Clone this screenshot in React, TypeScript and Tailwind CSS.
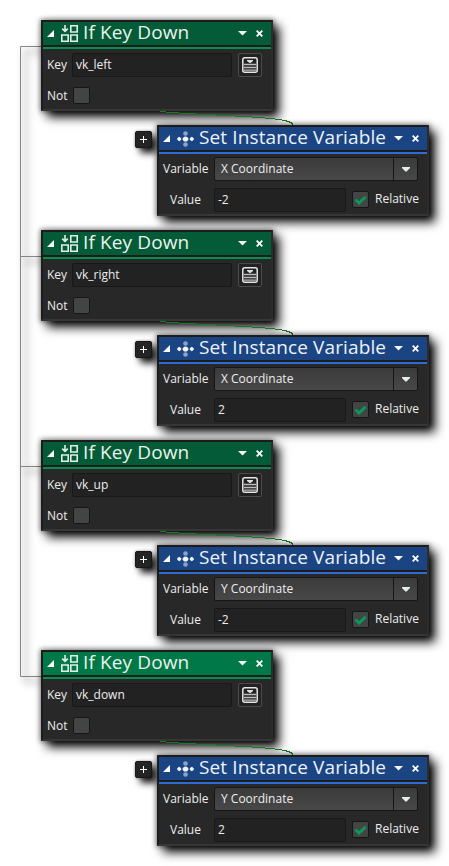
import React from "react";

type Block = { key: string; variable: string; value: string; active?: boolean };

const blocks: Block[] = [
  { key: "vk_left", variable: "X Coordinate", value: "-2" },
  { key: "vk_right", variable: "X Coordinate", value: "2" },
  { key: "vk_up", variable: "Y Coordinate", value: "-2" },
  { key: "vk_down", variable: "Y Coordinate", value: "2", active: true },
];

const card =
  "relative h-[91px] border-2 border-[#1c1c1c] border-b-[#363636] border-r-[#2c2c2c] bg-[#282828] shadow-[6px_6px_10px_0px_rgba(0,0,0,1),0_0_5px_1px_rgba(0,0,0,0.45)]";

function Collapse() {
  return (
    <svg className="h-[7px] w-[7px] shrink-0" viewBox="0 0 7 7">
      <path d="M7 0V7H0Z" fill="#fff" />
    </svg>
  );
}

function Caret() {
  return (
    <svg className="h-[5px] w-[9px] shrink-0" viewBox="0 0 9 5">
      <path d="M0 0H9L4.5 4.5Z" fill="#f6f6f6" />
    </svg>
  );
}

function SelectCaret() {
  return (
    <svg className="h-[5px] w-[8px] shrink-0" viewBox="0 0 8 5">
      <path d="M0 0H8V1L4.6 4.5H3.4L0 1Z" fill="#e4eee9" />
    </svg>
  );
}

function Close() {
  return (
    <svg className="h-[7px] w-[7px] shrink-0" viewBox="0 0 7 7">
      <path d="M.7 .7L6.3 6.3M6.3 .7L.7 6.3" stroke="#fff" strokeWidth="1.8" />
    </svg>
  );
}

function KeyIcon() {
  return (
    <svg className="h-[17px] w-[17px] shrink-0" viewBox="0 0 17 17" fill="none" stroke="#e2eee7" strokeWidth="1.6">
      <path d="M9.8 .8h6.4v6.2H9.8zM.8 10h6.4v6.2H.8zM9.8 10h6.4v6.2H9.8z" />
      <path d="M4 0V6.5M1.2 3.6L4 6.4L6.8 3.6" />
    </svg>
  );
}

function VariableIcon() {
  return (
    <svg className="h-4 w-[17px] shrink-0" viewBox="0 0 17 16">
      <g fill="#8da4c8">
        <circle cx="8.5" cy="2.5" r="2.3" />
        <circle cx="8.5" cy="13.5" r="2.3" />
      </g>
      <g fill="#f1f5fb">
        <path d="M2.2 5.8L4.6 8L2.2 10.2L0 8zM14.8 5.8L17 8L14.8 10.2L12.4 8z" />
        <circle cx="2.2" cy="8" r="1.8" />
        <circle cx="14.8" cy="8" r="1.8" />
        <circle cx="8.5" cy="8" r="2.6" />
        <path d="M5 8L7 6.8V9.2zM12 8L10 6.8V9.2z" />
      </g>
    </svg>
  );
}

function ListIcon() {
  return (
    <svg className="h-4 w-4" viewBox="0 0 16 16">
      <rect x=".8" y=".8" width="14.4" height="14.4" rx="2" fill="none" stroke="#e6e6e6" strokeWidth="1.5" />
      <path d="M5 3H11V4L8.5 6H7.5L5 4Z" fill="#dedede" />
      <path d="M2 7.5h12M2 10.5h12M2 13.1h12" stroke="#bcbcbc" strokeWidth="1.3" />
    </svg>
  );
}

function Checkbox({ checked }: { checked?: boolean }) {
  return (
    <div className="h-[17px] w-[17px] shrink-0 rounded-[2px] border border-[#161616] bg-[#434444]">
      {checked && (
        <svg className="h-[15px] w-[15px]" viewBox="0 0 15 15">
          <path d="M2.4 7.5L6 11L12.6 4.9" fill="none" stroke="#079a5a" strokeWidth="2.8" />
        </svg>
      )}
    </div>
  );
}

const field =
  "h-6 shrink-0 rounded-[2px] border border-[#181818] bg-[#222222] pl-[3px] leading-[22px]";

const title =
  "-mt-1 ml-[5px] flex-1 whitespace-nowrap text-[19px] leading-[22px] tracking-[0.12px]";

function ConditionCard({ block }: { block: Block }) {
  return (
    <div className={`${card} ml-[41px] w-[232px]`}>
      <div className={`flex h-[23px] items-center pl-1 pr-2 ${block.active ? "bg-[#007847]" : "bg-[#045b37]"}`}>
        <Collapse />
        <div className="ml-[7px]"><KeyIcon /></div>
        <span className={`${title} text-[#eaf3ee]`}>If Key Down</span>
        <Caret />
        <div className="ml-[9px]"><Close /></div>
      </div>
      <div className="h-1 border-t-2 border-[#1c1c1c] bg-[#078d52]" />
      <div className="mt-1 flex items-center pl-1">
        <span className="w-[25px]">Key</span>
        <div className={`${field} w-[160px]`}>{block.key}</div>
        <div className="ml-[6px] flex h-6 w-6 items-center justify-center rounded-[2px] border border-[#4b4b4b] bg-[#222]">
          <ListIcon />
        </div>
      </div>
      <div className="mt-[10px] flex h-[17px] items-center pl-1">
        <span className="w-[26px]">Not</span>
        <Checkbox />
      </div>
    </div>
  );
}

function ActionCard({ block }: { block: Block }) {
  return (
    <div className={`${card} w-[272px]`}>
      <div className="flex h-[23px] items-center bg-[#1b4483] pl-1 pr-2">
        <Collapse />
        <div className="ml-[7px]"><VariableIcon /></div>
        <span className={`${title} text-[#edf2fa]`}>Set Instance Variable</span>
        <Caret />
        <div className="ml-[9px]"><Close /></div>
      </div>
      <div className="h-1 border-t-2 border-[#1c1c1c] bg-[#2e6bd3]" />
      <div className="mt-[3px] flex items-center pl-1">
        <span className="w-[51px]">Variable</span>
        <div className="flex h-6 w-[204px] rounded-[2px] border border-[#161616] bg-gradient-to-b from-[#3b3b3b] to-[#484848]">
          <span className="flex-1 pl-[6px] leading-[22px]">{block.variable}</span>
          <div className="flex w-6 items-center justify-center border-l border-[#161616]">
            <SelectCaret />
          </div>
        </div>
      </div>
      <div className="mt-[7px] flex items-center pl-[11px]">
        <span className="w-[44px]">Value</span>
        <div className={`${field} w-[132px]`}>{block.value}</div>
        <div className="-mt-[1px] ml-[6px] flex items-center">
          <Checkbox checked />
          <span className="-mt-px ml-[6px] leading-4">Relative</span>
        </div>
      </div>
    </div>
  );
}

export default function App() {
  return (
    <div className="relative h-[866px] w-[449px] overflow-hidden bg-white pt-5 font-['Open_Sans','Noto_Sans',sans-serif] text-[12px] leading-4 text-[#ededed]">
      <svg className="absolute left-0 top-0 h-[866px] w-[449px] drop-shadow-[5px_5px_4px_rgba(0,0,0,0.85)]" fill="none">
        <path d="M41 46.5H20.5V676.5H41M20.5 256.5H41M20.5 466.5H41" stroke="#858585" />
      </svg>
      {blocks.map((block) => (
        <section key={block.key} className="relative h-[210px]">
          <ConditionCard block={block} />
          <svg className="absolute left-[157px] top-[91px] h-[15px] w-[137px]" fill="none">
            <path d="M3 .5C40 4 75 4 108 7C125 8.5 136 10 136 14" stroke="#187823" shapeRendering="crispEdges" />
          </svg>
          <div className="mt-[14px] flex items-start">
            <div className="ml-[135px] mr-[5px] mt-[6px] flex h-[17px] w-[17px] items-center justify-center rounded-[2px] border border-[#191919] bg-[#242424] shadow-[5px_5px_7px_rgba(0,0,0,0.9),0_0_3px_rgba(0,0,0,0.35)]">
              <svg className="h-[7px] w-[7px]" viewBox="0 0 7 7">
                <path d="M3.5 0V7M0 3.5H7" stroke="#fff" />
              </svg>
            </div>
            <ActionCard block={block} />
          </div>
        </section>
      ))}
    </div>
  );
}
